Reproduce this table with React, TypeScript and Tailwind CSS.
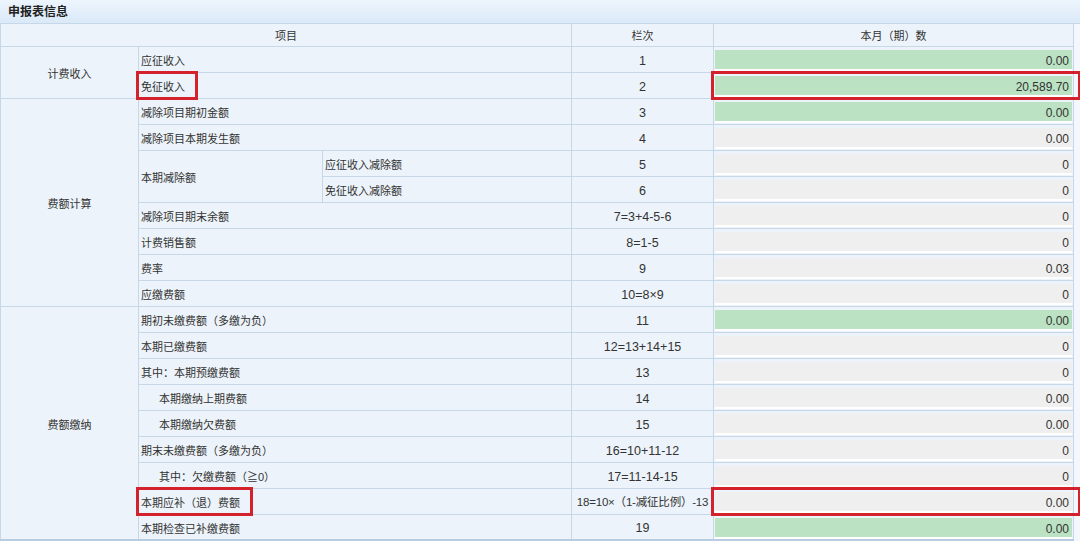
const FONT = "font-['Liberation_Sans','Noto_Sans_CJK_SC',sans-serif]"

type Row = {
  value: string
  green?: boolean
  mark?: boolean
}

const line = 'border border-[#c6d7e8]'
const textCell = `${line} px-[2px] pt-[4px] pb-0 text-left text-[11px] text-[#333] whitespace-nowrap`
const groupCell = `${line} pt-[4px] pb-0 text-center text-[11px] text-[#333]`

function ValueCell({ value, green = false, mark = false }: Row) {
  return (
    <td className={`${line} relative p-0 px-[1px] pt-[3px] align-top`}>
      <div
        className={`h-[21px] leading-[22px] text-right pr-[3px] text-[12px] text-[#333] border-b-2 border-white ${
          green ? 'bg-[#bae2c3]' : 'bg-[#efefef]'
        }`}
      >
        {value}
      </div>
      {mark && (
        <div className="absolute left-[-3px] right-[-8px] top-[-2px] bottom-[-2px] border-[3px] border-[#d3222c] pointer-events-none" />
      )}
    </td>
  )
}

function NoCell({ no, small = false }: { no: string; small?: boolean }) {
  return (
    <td
      className={`${line} pt-[4px] pb-0 px-0 text-center text-[#333] whitespace-nowrap ${
        small ? 'text-[11.5px] tracking-[-0.2px]' : 'text-[12.5px]'
      }`}
    >
      {no}
    </td>
  )
}

function Marked({ children, width }: { children: React.ReactNode; width: number }) {
  return (
    <td colSpan={2} className={`${textCell} relative`}>
      {children}
      <div
        className="absolute left-[-3px] top-[-2px] bottom-[-2px] border-[3px] border-[#d3222c] pointer-events-none"
        style={{ width }}
      />
    </td>
  )
}

export default function App() {
  return (
    <div className={`w-[1080px] h-[541px] overflow-hidden bg-[#f4f8fc] ${FONT}`}>
      <div className="h-[24px] flex items-center px-[8px] bg-gradient-to-b from-[#edf5fd] to-[#dae9f8] border-b border-[#c6d7e8]">
        <span className="text-[12px] font-bold text-[#222]">申报表信息</span>
      </div>
      <table className="w-[1073px] table-fixed border-collapse bg-[#edf3fa]">
        <colgroup>
          <col className="w-[138px]" />
          <col className="w-[184px]" />
          <col className="w-[249px]" />
          <col className="w-[142px]" />
          <col className="w-[360px]" />
        </colgroup>
        <thead>
          <tr className="h-[22px] text-[11px] text-[#333]">
            <th colSpan={3} className={`${line} border-t-0 pt-[3px] pb-0 font-normal`}>项目</th>
            <th className={`${line} border-t-0 pt-[3px] pb-0 font-normal`}>栏次</th>
            <th className={`${line} border-t-0 pt-[3px] pb-0 font-normal`}>本月（期）数</th>
          </tr>
        </thead>
        <tbody>
          <tr className="h-[26px]">
            <td rowSpan={2} className={groupCell}>计费收入</td>
            <td colSpan={2} className={textCell}>应征收入</td>
            <NoCell no="1" />
            <ValueCell value="0.00" green />
          </tr>
          <tr className="h-[26px]">
            <Marked width={62}>免征收入</Marked>
            <NoCell no="2" />
            <ValueCell value="20,589.70" green mark />
          </tr>
          <tr className="h-[26px]">
            <td rowSpan={8} className={groupCell}>费额计算</td>
            <td colSpan={2} className={textCell}>减除项目期初金额</td>
            <NoCell no="3" />
            <ValueCell value="0.00" green />
          </tr>
          <tr className="h-[26px]">
            <td colSpan={2} className={textCell}>减除项目本期发生额</td>
            <NoCell no="4" />
            <ValueCell value="0.00" />
          </tr>
          <tr className="h-[26px]">
            <td rowSpan={2} className={textCell}>本期减除额</td>
            <td className={textCell}>应征收入减除额</td>
            <NoCell no="5" />
            <ValueCell value="0" />
          </tr>
          <tr className="h-[26px]">
            <td className={textCell}>免征收入减除额</td>
            <NoCell no="6" />
            <ValueCell value="0" />
          </tr>
          <tr className="h-[26px]">
            <td colSpan={2} className={textCell}>减除项目期末余额</td>
            <NoCell no="7=3+4-5-6" />
            <ValueCell value="0" />
          </tr>
          <tr className="h-[26px]">
            <td colSpan={2} className={textCell}>计费销售额</td>
            <NoCell no="8=1-5" />
            <ValueCell value="0" />
          </tr>
          <tr className="h-[26px]">
            <td colSpan={2} className={textCell}>费率</td>
            <NoCell no="9" />
            <ValueCell value="0.03" />
          </tr>
          <tr className="h-[26px]">
            <td colSpan={2} className={textCell}>应缴费额</td>
            <NoCell no="10=8×9" />
            <ValueCell value="0" />
          </tr>
          <tr className="h-[26px]">
            <td rowSpan={9} className={groupCell}>费额缴纳</td>
            <td colSpan={2} className={textCell}>期初未缴费额（多缴为负）</td>
            <NoCell no="11" />
            <ValueCell value="0.00" green />
          </tr>
          <tr className="h-[26px]">
            <td colSpan={2} className={textCell}>本期已缴费额</td>
            <NoCell no="12=13+14+15" />
            <ValueCell value="0" />
          </tr>
          <tr className="h-[26px]">
            <td colSpan={2} className={textCell}>其中：本期预缴费额</td>
            <NoCell no="13" />
            <ValueCell value="0" />
          </tr>
          <tr className="h-[26px]">
            <td colSpan={2} className={`${textCell} pl-[20px]`}>本期缴纳上期费额</td>
            <NoCell no="14" />
            <ValueCell value="0.00" />
          </tr>
          <tr className="h-[26px]">
            <td colSpan={2} className={`${textCell} pl-[20px]`}>本期缴纳欠费额</td>
            <NoCell no="15" />
            <ValueCell value="0.00" />
          </tr>
          <tr className="h-[26px]">
            <td colSpan={2} className={textCell}>期末未缴费额（多缴为负）</td>
            <NoCell no="16=10+11-12" />
            <ValueCell value="0" />
          </tr>
          <tr className="h-[26px]">
            <td colSpan={2} className={`${textCell} pl-[20px]`}>其中：欠缴费额（≧0）</td>
            <NoCell no="17=11-14-15" />
            <ValueCell value="0" />
          </tr>
          <tr className="h-[26px]">
            <Marked width={117}>本期应补（退）费额</Marked>
            <NoCell no="18=10×（1-减征比例）-13" small />
            <ValueCell value="0.00" mark />
          </tr>
          <tr className="h-[26px] border-b-2 border-[#b8cde2]">
            <td colSpan={2} className={textCell}>本期检查已补缴费额</td>
            <NoCell no="19" />
            <ValueCell value="0.00" green />
          </tr>
        </tbody>
      </table>
    </div>
  )
}
